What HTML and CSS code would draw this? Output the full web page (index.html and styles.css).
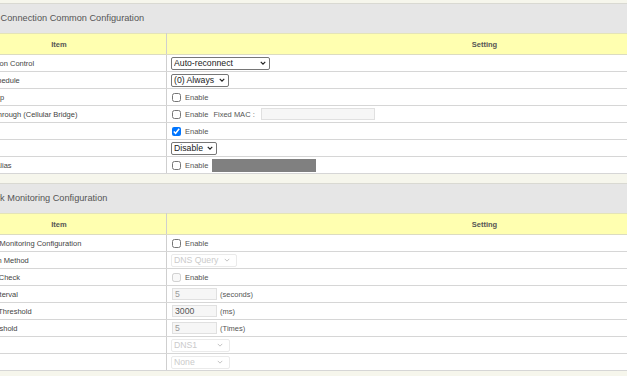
FILE: index.html
```html
<!DOCTYPE html>
<html>
<head>
    <title>Connection Configuration</title>
    <link rel="stylesheet" href="styles.css">
</head>
<body>
    <div class="page">
        <!-- Connection common settings -->
        <div class="section">
            <div class="section-title">Mobile Connection Common Configuration</div>
            <table class="cfg">
                <tr>
                    <th class="item-col">Item</th>
                    <th>Setting</th>
                </tr>
                <tr>
                    <td class="label">Connection Control</td>
                    <td class="val">
                        <span class="sel-wrap">
                            <select class="sel sel-auto"><option>Auto-reconnect</option></select>
                            <svg class="chev" viewBox="0 0 8 5"><path d="M1 1 L4 4 L7 1"/></svg>
                        </span>
                    </td>
                </tr>
                <tr>
                    <td class="label">Time Schedule</td>
                    <td class="val">
                        <span class="sel-wrap">
                            <select class="sel sel-always"><option>(0) Always</option></select>
                            <svg class="chev" viewBox="0 0 8 5"><path d="M1 1 L4 4 L7 1"/></svg>
                        </span>
                    </td>
                </tr>
                <tr>
                    <td class="label">SIM Swap</td>
                    <td class="val"><label class="chk"><input type="checkbox"> Enable</label></td>
                </tr>
                <tr>
                    <td class="label">IP Passthrough (Cellular Bridge)</td>
                    <td class="val">
                        <label class="chk"><input type="checkbox"> Enable</label>
                        <span class="extra">Fixed MAC :</span>
                        <input type="text" class="txt txt-mac" disabled>
                    </td>
                </tr>
                <tr>
                    <td class="label">NAT</td>
                    <td class="val"><label class="chk"><input type="checkbox" checked> Enable</label></td>
                </tr>
                <tr>
                    <td class="label">TTL</td>
                    <td class="val">
                        <span class="sel-wrap">
                            <select class="sel sel-disable"><option>Disable</option></select>
                            <svg class="chev" viewBox="0 0 8 5"><path d="M1 1 L4 4 L7 1"/></svg>
                        </span>
                    </td>
                </tr>
                <tr>
                    <td class="label">LAN IP Alias</td>
                    <td class="val">
                        <label class="chk"><input type="checkbox"> Enable</label>
                        <input type="text" class="txt txt-alias" disabled>
                    </td>
                </tr>
            </table>
        </div>

        <!-- Network monitoring -->
        <div class="section">
            <div class="section-title">Network Monitoring Configuration</div>
            <table class="cfg">
                <tr>
                    <th class="item-col">Item</th>
                    <th>Setting</th>
                </tr>
                <tr>
                    <td class="label">Network Monitoring Configuration</td>
                    <td class="val"><label class="chk"><input type="checkbox"> Enable</label></td>
                </tr>
                <tr>
                    <td class="label">Detection Method</td>
                    <td class="val">
                        <span class="sel-wrap off">
                            <select class="sel sel-dns" disabled><option>DNS Query</option></select>
                            <svg class="chev" viewBox="0 0 8 5"><path d="M1 1 L4 4 L7 1"/></svg>
                        </span>
                    </td>
                </tr>
                <tr>
                    <td class="label">Loading Check</td>
                    <td class="val"><label class="chk"><input type="checkbox" disabled> Enable</label></td>
                </tr>
                <tr>
                    <td class="label">Check Interval</td>
                    <td class="val"><input type="text" class="txt txt-num" value="5" disabled> <span class="unit">(seconds)</span></td>
                </tr>
                <tr>
                    <td class="label">Latency Threshold</td>
                    <td class="val"><input type="text" class="txt txt-num dark" value="3000" disabled> <span class="unit">(ms)</span></td>
                </tr>
                <tr>
                    <td class="label">Fail Threshold</td>
                    <td class="val"><input type="text" class="txt txt-num" value="5" disabled> <span class="unit">(Times)</span></td>
                </tr>
                <tr>
                    <td class="label">Target 1</td>
                    <td class="val">
                        <span class="sel-wrap off">
                            <select class="sel sel-target" disabled><option>DNS1</option></select>
                            <svg class="chev" viewBox="0 0 8 5"><path d="M1 1 L4 4 L7 1"/></svg>
                        </span>
                    </td>
                </tr>
                <tr>
                    <td class="label">Target 2</td>
                    <td class="val">
                        <span class="sel-wrap off">
                            <select class="sel sel-target" disabled><option>None</option></select>
                            <svg class="chev" viewBox="0 0 8 5"><path d="M1 1 L4 4 L7 1"/></svg>
                        </span>
                    </td>
                </tr>
            </table>
        </div>
    </div>
</body>
</html>
```

FILE: styles.css
```css
html, body {
    margin: 0;
    padding: 0;
    overflow: hidden;
}
body {
    background: #f6f6ec;
    font-family: 'Liberation Sans', Arial, sans-serif;
    color: #444;
}
.page {
    width: 850px;
    margin-left: -48px;
    padding-top: 3px;
}
.section {
    margin-bottom: 9px;
}
.section-title {
    box-sizing: border-box;
    height: 30px;
    line-height: 29px;
    padding-left: 19px;
    background: #e6e6e6;
    border-top: 1px solid #d9d9d2;
    font-size: 9.2px;
    color: #555;
}
.cfg {
    width: 100%;
    border-collapse: collapse;
    background: #fff;
    table-layout: fixed;
}
.cfg th {
    height: 20px;
    padding: 0;
    background: #ffffb0;
    border-top: 1px solid #e4e4b8;
    border-bottom: 1px solid #dcdcc0;
    font-size: 7.5px;
    font-weight: bold;
    color: #555;
    text-align: center;
}
.cfg .item-col {
    width: 214px;
    border-right: 1px solid #cfcfcf;
}
.cfg td {
    height: 16px;
    padding: 0 4px;
    border-bottom: 1px solid #d6d6d6;
    font-size: 7.5px;
    vertical-align: middle;
    white-space: nowrap;
}
.cfg .label {
    padding-left: 18px;
    border-right: 1px solid #cfcfcf;
    color: #444;
}
.val {
    color: #555;
}
.sel-wrap {
    position: relative;
    display: inline-block;
    vertical-align: middle;
    line-height: 0;
}
.sel {
    box-sizing: border-box;
    appearance: none;
    -webkit-appearance: none;
    height: 13px;
    padding: 0 0 0 2px;
    font-family: 'Liberation Sans', Arial, sans-serif;
    font-size: 8.7px;
    line-height: 11px;
    color: #222;
    background: #fff;
    border: 1px solid #767676;
    border-radius: 2px;
}
.sel:disabled {
    color: #b4b4b4;
    border-color: #e2e2e2;
}
.chev {
    position: absolute;
    top: 4px;
    right: 4px;
    width: 6px;
    height: 4px;
    fill: none;
    stroke: #222;
    stroke-width: 1.6;
    pointer-events: none;
}
.sel-wrap.off .chev {
    stroke: #bdbdbd;
    stroke-width: 1.2;
    right: 7px;
}
.sel-auto { width: 99px; }
.sel-always { width: 58px; }
.sel-disable { width: 46px; }
.sel-dns { width: 66px; }
.sel-target { width: 59px; }
.chk {
    display: inline-flex;
    align-items: center;
    gap: 4px;
    vertical-align: middle;
}
.chk input {
    width: 9px;
    height: 9px;
    margin: 0 0 0 1px;
}
.extra {
    margin-left: 3px;
    vertical-align: middle;
}
.txt {
    box-sizing: border-box;
    height: 12px;
    padding: 0 2px;
    font-family: 'Liberation Sans', Arial, sans-serif;
    font-size: 8.7px;
    color: #9a9a9a;
    background: #f6f6f6;
    border: 1px solid #e0e0e0;
    vertical-align: middle;
}
.txt.dark {
    color: #555;
}
.txt-mac {
    width: 114px;
    margin-left: 4px;
}
.txt-alias {
    width: 104px;
    height: 13px;
    margin-left: 2px;
    background: #808080;
    border-color: #808080;
}
.txt-num {
    width: 45px;
    margin-left: 1px;
}
.unit {
    margin-left: 1px;
    vertical-align: middle;
}
```
